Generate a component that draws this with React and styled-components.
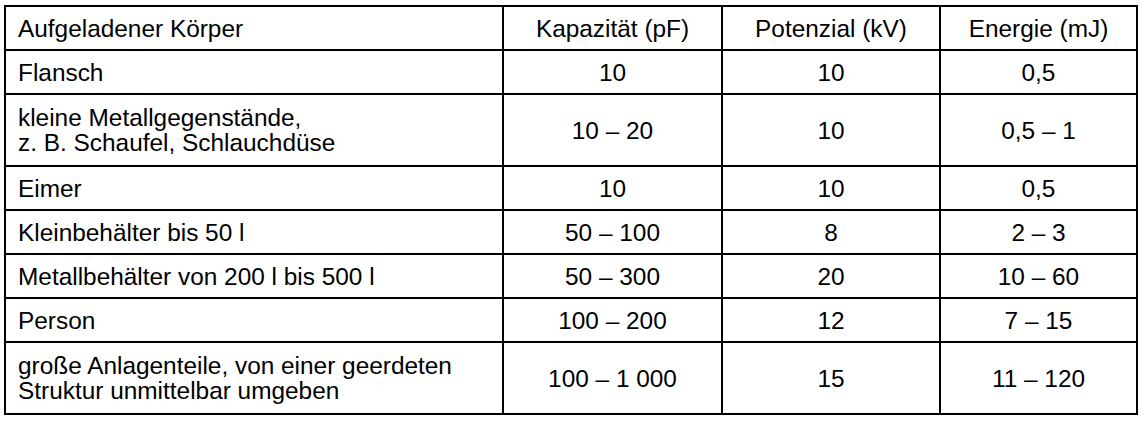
import React from 'react'
import styled, { createGlobalStyle } from 'styled-components'

const GlobalStyle = createGlobalStyle`
  html, body {
    margin: 0;
    padding: 0;
    background: #ffffff;
  }
  body {
    font-family: "Liberation Sans", Arial, sans-serif;
    color: #000000;
  }
`

const Page = styled.div`
  padding: 5px 4px;
`

const Table = styled.table`
  width: 1134px;
  border-collapse: collapse;
  table-layout: fixed;
  font-size: 24.4px;
  line-height: 25px;
`

const Cell = styled.td`
  border: 2px solid #000;
  padding: 0 12px;
  height: ${p => (p.$tall ? 70 : 42)}px;
  text-align: ${p => (p.$left ? 'left' : 'center')};
  vertical-align: middle;
  font-weight: normal;
`

const columns = [498, 219, 218, 197]

const header = ['Aufgeladener Körper', 'Kapazität (pF)', 'Potenzial (kV)', 'Energie (mJ)']

const rows = [
  { body: ['Flansch'], c: '10', p: '10', e: '0,5' },
  { body: ['kleine Metallgegenstände,', 'z. B. Schaufel, Schlauchdüse'], c: '10 – 20', p: '10', e: '0,5 – 1' },
  { body: ['Eimer'], c: '10', p: '10', e: '0,5' },
  { body: ['Kleinbehälter bis 50 l'], c: '50 – 100', p: '8', e: '2 – 3' },
  { body: ['Metallbehälter von 200 l bis 500 l'], c: '50 – 300', p: '20', e: '10 – 60' },
  { body: ['Person'], c: '100 – 200', p: '12', e: '7 – 15' },
  { body: ['große Anlagenteile, von einer geerdeten', 'Struktur unmittelbar umgeben'], c: '100 – 1 000', p: '15', e: '11 – 120' },
]

const App = () => {
  return (
    <>
      <GlobalStyle />
      <Page>
        <Table>
          <colgroup>
            {columns.map((w, i) => <col key={i} style={{ width: w }} />)}
          </colgroup>
          <tbody>
            <tr>
              {header.map((h, i) => (
                <Cell as="th" key={i} $left={i === 0}>{h}</Cell>
              ))}
            </tr>
            {rows.map((r, i) => {
              const tall = r.body.length > 1
              return (
                <tr key={i}>
                  <Cell $left $tall={tall}>
                    {r.body.map((line, j) => (
                      <React.Fragment key={j}>
                        {j > 0 && <br />}
                        {line}
                      </React.Fragment>
                    ))}
                  </Cell>
                  <Cell $tall={tall}>{r.c}</Cell>
                  <Cell $tall={tall}>{r.p}</Cell>
                  <Cell $tall={tall}>{r.e}</Cell>
                </tr>
              )
            })}
          </tbody>
        </Table>
      </Page>
    </>
  )
}

export default App
